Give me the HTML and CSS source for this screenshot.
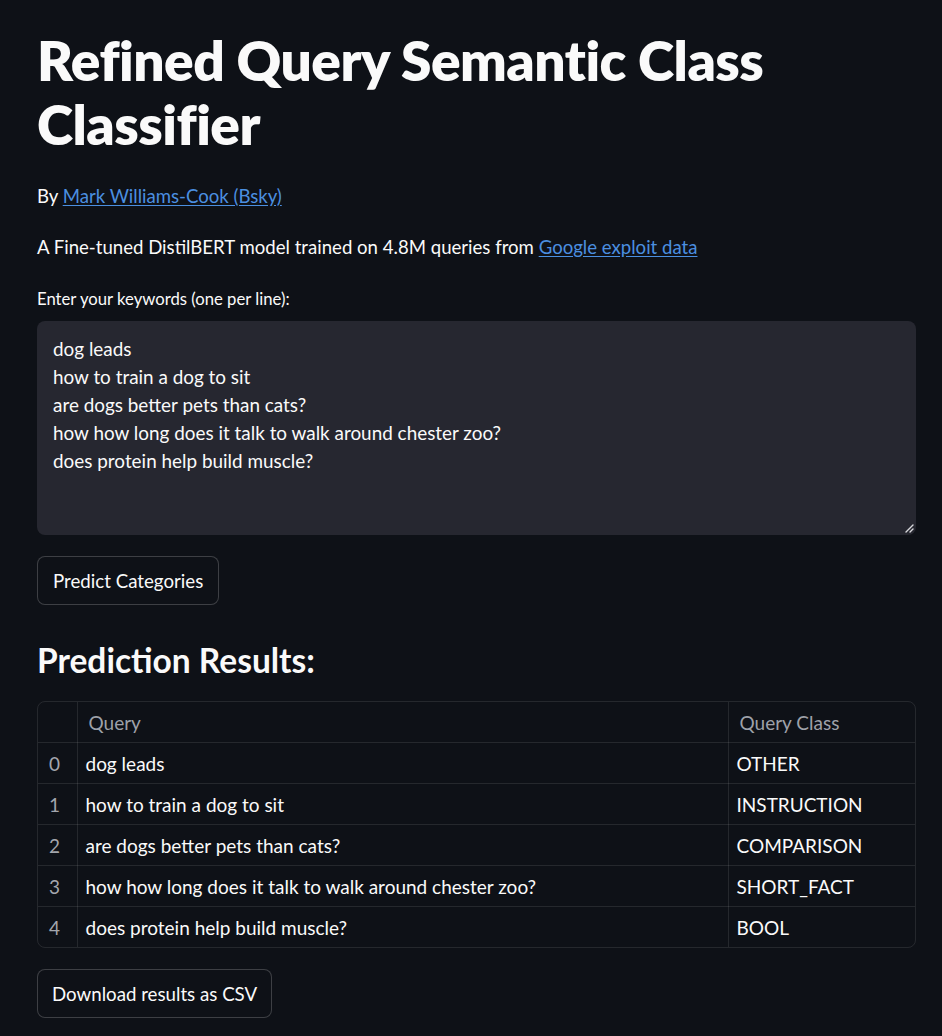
FILE: index.html
```html
<!DOCTYPE html>
<html lang="en">
<head>
<meta charset="utf-8">
<title>Refined Query Semantic Class Classifier</title>
<link rel="stylesheet" href="styles.css">
</head>
<body>
<main class="main">
  <h1 class="title">Refined Query Semantic Class Classifier</h1>
  <p class="byline">By <a href="#">Mark Williams-Cook (Bsky)</a></p>
  <p class="desc">A Fine-tuned DistilBERT model trained on 4.8M queries from <a href="#">Google exploit data</a></p>

  <label class="field-label">Enter your keywords (one per line):</label>
  <div class="textarea">
    <div class="textarea-text">dog leads<br>how to train a dog to sit<br>are dogs better pets than cats?<br>how how long does it talk to walk around chester zoo?<br>does protein help build muscle?</div>
    <svg class="grip" width="10" height="10" viewBox="0 0 10 10"><path d="M9 2 L2 9 M9 6 L6 9" stroke="#d8d8dc" stroke-width="1.4" stroke-linecap="round"/></svg>
  </div>

  <button class="btn predict">Predict Categories</button>

  <h3 class="section">Prediction Results:</h3>

  <div class="table-wrap">
    <table class="results">
      <colgroup><col class="c-idx"><col class="c-query"><col class="c-class"></colgroup>
      <thead>
        <tr><th></th><th>Query</th><th>Query Class</th></tr>
      </thead>
      <tbody>
        <tr><td class="idx">0</td><td>dog leads</td><td>OTHER</td></tr>
        <tr><td class="idx">1</td><td>how to train a dog to sit</td><td>INSTRUCTION</td></tr>
        <tr><td class="idx">2</td><td>are dogs better pets than cats?</td><td>COMPARISON</td></tr>
        <tr><td class="idx">3</td><td>how how long does it talk to walk around chester zoo?</td><td>SHORT_FACT</td></tr>
        <tr><td class="idx">4</td><td>does protein help build muscle?</td><td>BOOL</td></tr>
      </tbody>
    </table>
  </div>

  <button class="btn download">Download results as CSV</button>
</main>
</body>
</html>
```

FILE: styles.css
```css
html, body {
  margin: 0;
  padding: 0;
  background: #0e1117;
  color: #fafafa;
  font-family: "Lato", "Source Sans Pro", sans-serif;
}

.main {
  display: flex;
  flex-direction: column;
  align-items: flex-start;
  padding: 28px 26px 0 37px;
  width: 879px;
}

.title {
  margin: 0;
  font-size: 55px;
  line-height: 64px;
  font-weight: 800;
  letter-spacing: -0.5px;
}

.byline,
.desc {
  margin: 26px 0 0;
  font-size: 18.6px;
  line-height: 28px;
}

.desc {
  margin-top: 23px;
}

a {
  color: #4b8fe0;
  text-decoration: underline;
  text-underline-offset: 2px;
}

.field-label {
  margin-top: 28px;
  font-size: 16.7px;
  line-height: 20px;
}

.textarea {
  position: relative;
  margin-top: 12px;
  align-self: stretch;
  height: 214px;
  box-sizing: border-box;
  background: #262730;
  border-radius: 8px;
  padding: 14px 16px;
}

.textarea-text {
  font-size: 18.9px;
  line-height: 28px;
  color: #fafafa;
}

.grip {
  position: absolute;
  right: 2px;
  bottom: 2px;
}

.btn {
  font-family: inherit;
  font-size: 18.7px;
  color: #fafafa;
  background: #0e1117;
  border: 1px solid rgba(250, 250, 250, 0.2);
  border-radius: 8px;
  height: 49px;
  padding: 0 15px;
}

.predict {
  margin-top: 21px;
}

.section {
  margin: 33px 0 0;
  font-size: 33.5px;
  line-height: 44px;
  font-weight: 700;
}

.table-wrap {
  margin-top: 19px;
  align-self: stretch;
  border: 1px solid rgba(250, 250, 250, 0.1);
  border-radius: 8px;
  overflow: hidden;
}

.results {
  width: 100%;
  border-collapse: collapse;
  table-layout: fixed;
  font-size: 19px;
}

.c-idx { width: 39px; }
.c-class { width: 187px; }

.results th,
.results td {
  height: 40px;
  padding: 0 8px;
  text-align: left;
  font-weight: 400;
  border-right: 1px solid rgba(250, 250, 250, 0.1);
  border-bottom: 1px solid rgba(250, 250, 250, 0.1);
  white-space: nowrap;
}

.results th {
  color: #9ea1a9;
  padding-left: 11px;
}

.results td.idx {
  color: #a3a6ad;
  padding-left: 11px;
}

.results tr > :last-child { border-right: none; }
.results tbody tr:last-child td { border-bottom: none; }

.download {
  margin-top: 21px;
  padding: 0 14px;
}
```
